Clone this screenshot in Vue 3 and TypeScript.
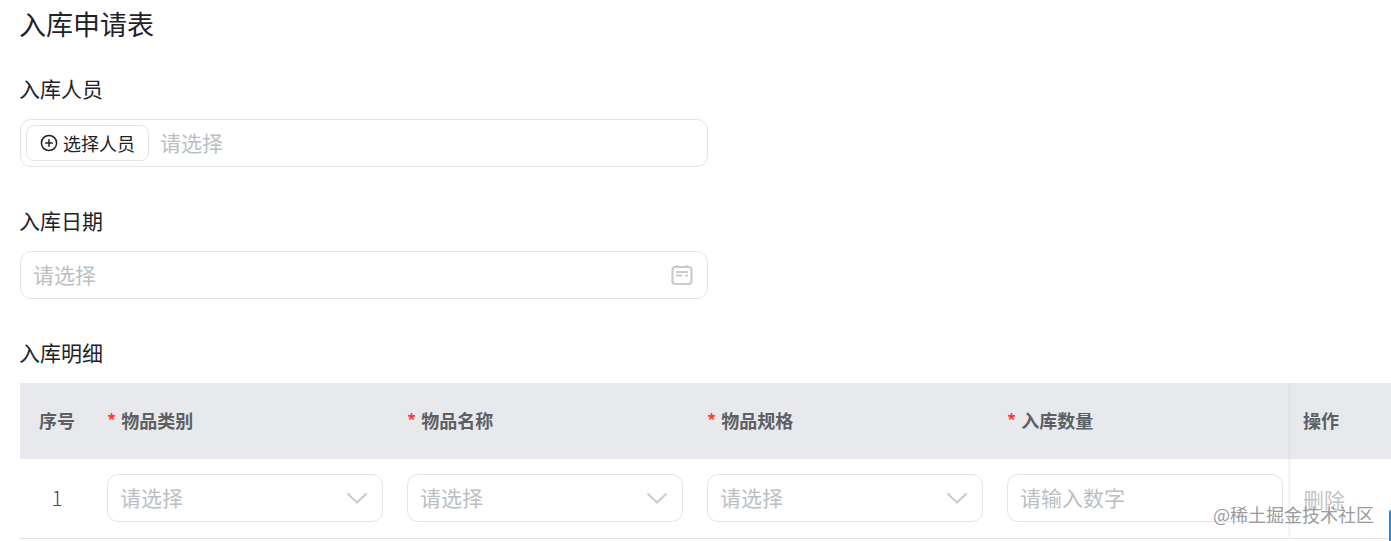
<script setup lang="ts">
const columns = [
  { title: '物品类别', placeholder: '请选择', select: true },
  { title: '物品名称', placeholder: '请选择', select: true },
  { title: '物品规格', placeholder: '请选择', select: true },
  { title: '入库数量', placeholder: '请输入数字', select: false }
]
</script>

<template>
  <div class="page">
    <h1 class="title">入库申请表</h1>

    <div class="label">入库人员</div>
    <div class="field field-picker">
      <button class="pick-btn">
        <svg class="plus" viewBox="0 0 18 18" width="18" height="18">
          <circle cx="9" cy="9" r="7.6" fill="none" stroke="currentColor" stroke-width="1.5" />
          <path d="M9 5.2v7.6M5.2 9h7.6" fill="none" stroke="currentColor" stroke-width="1.5" />
        </svg>
        选择人员
      </button>
      <span class="placeholder">请选择</span>
    </div>

    <div class="label label-date">入库日期</div>
    <div class="field field-date">
      <span class="placeholder">请选择</span>
      <svg class="calendar" viewBox="0 0 22 22" width="22" height="22">
        <rect x="1.5" y="3" width="19" height="17" rx="3" fill="none" stroke="currentColor" stroke-width="2.2" />
        <path d="M6 1v3M16 1v3" fill="none" stroke="currentColor" stroke-width="2.2" />
        <path d="M5 8h12M5 11.5h6M14 11.5h3" fill="none" stroke="currentColor" stroke-width="1.8" />
      </svg>
    </div>

    <div class="label label-detail">入库明细</div>
    <div class="table">
      <div class="head-cell head-seq">序号</div>
      <div v-for="col in columns" :key="col.title" class="head-cell head-col">
        <span class="star">*</span>{{ col.title }}
      </div>
      <div class="head-cell head-op">操作</div>

      <div class="body-cell cell-seq">1</div>
      <div v-for="col in columns" :key="col.title + '-input'" class="body-cell">
        <div class="field cell-field">
          <span class="placeholder">{{ col.placeholder }}</span>
          <svg v-if="col.select" class="chevron" viewBox="0 0 22 12" width="22" height="12">
            <path d="M1.5 1.5L11 10.5L20.5 1.5" fill="none" stroke="currentColor" stroke-width="2" />
          </svg>
        </div>
      </div>
      <div class="body-cell cell-op">删除</div>
    </div>

    <div class="watermark">@稀土掘金技术社区</div>
    <div class="edge-tab"></div>
  </div>
</template>

<style scoped>
.page {
  position: relative;
  width: 1391px;
  height: 541px;
  overflow: hidden;
  box-sizing: border-box;
  padding-left: 20px;
  background: #fff;
  color: #1f2329;
  font-family: "Noto Sans CJK SC", "Noto Sans", sans-serif;
}
.title {
  margin: 0 0 0 -1px;
  height: 52px;
  line-height: 48px;
  font-size: 27px;
  font-weight: 400;
}
.label {
  margin: 20px 0 0 -1px;
  height: 36px;
  line-height: 32px;
  font-size: 21px;
}
.label-date {
  margin-top: 37px;
}
.label-detail {
  margin-top: 37px;
}
.field {
  display: flex;
  align-items: center;
  box-sizing: border-box;
  width: 688px;
  height: 48px;
  margin-top: 11px;
  border: 1px solid #e4e5e7;
  border-radius: 11px;
  font-size: 21px;
}
.field-picker {
  padding-left: 5px;
  gap: 11px;
}
.field-date {
  justify-content: space-between;
  padding: 0 14px 0 12px;
}
.placeholder {
  margin-bottom: 2px;
  color: #bbbfc4;
  line-height: 1;
}
.pick-btn {
  display: flex;
  align-items: center;
  gap: 5px;
  box-sizing: border-box;
  width: 123px;
  height: 36px;
  padding: 0 0 0 13px;
  border: 1px solid #e4e5e7;
  border-radius: 8px;
  background: #fff;
  color: #1f2329;
  font-family: inherit;
  font-size: 18px;
}
.plus {
  flex: none;
}
.calendar {
  color: #c9cbcf;
}
.table {
  display: grid;
  grid-template-columns: 87px 300px 300px 300px 281px 103px;
  grid-template-rows: 76px 80px;
  margin-top: 11px;
  width: 1371px;
}
.head-cell {
  display: flex;
  align-items: center;
  padding-bottom: 2px;
  box-sizing: border-box;
  background: #e8e9ec;
  color: #5c5f64;
  font-size: 18px;
  font-weight: 700;
}
.head-seq {
  justify-content: center;
  padding-right: 13px;
}
.star {
  margin-right: 5px;
  color: #f04438;
  font-size: 18px;
}
.head-op {
  padding-left: 12px;
  border-left: 3px solid #e2e3e6;
}
.body-cell {
  display: flex;
  align-items: center;
  border-bottom: 1px solid #dfe1e4;
  box-sizing: border-box;
  padding-bottom: 1px;
}
.cell-seq {
  justify-content: center;
  padding-right: 13px;
  padding-bottom: 3px;
  color: #4a4d52;
  font-size: 21px;
  font-weight: 300;
}
.cell-field {
  justify-content: space-between;
  width: 276px;
  margin-top: 0;
  padding: 0 14px 0 12px;
}
.chevron {
  color: #c9cbcf;
}
.cell-op {
  padding-left: 12px;
  padding-top: 1px;
  border-left: 3px solid #f5f5f6;
  color: #c2c4c8;
  font-size: 21px;
}
.watermark {
  position: absolute;
  right: 17px;
  top: 501px;
  line-height: 26px;
  font-size: 18px;
  color: #999b9f;
  white-space: nowrap;
}
.edge-tab {
  position: absolute;
  right: 0;
  top: 510px;
  width: 2px;
  height: 31px;
  background: #1e88e5;
  border-radius: 2px 0 0 0;
}
</style>

<style>
html, body {
  margin: 0;
  overflow: hidden;
  background: #fff;
}
</style>
